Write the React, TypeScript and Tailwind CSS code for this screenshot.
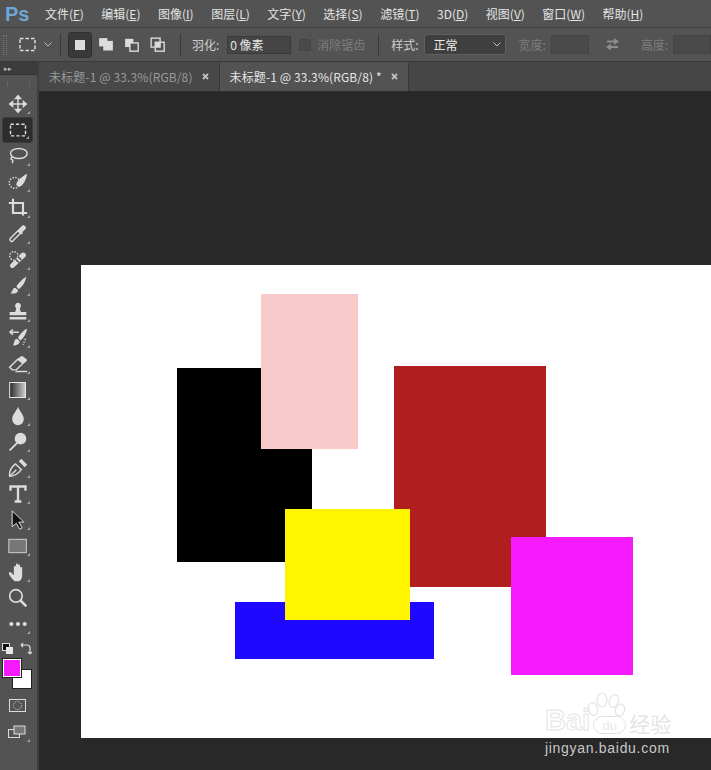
import type { ReactNode } from 'react'

const cn = 'font-["Noto_Sans_CJK_SC","Liberation_Sans",sans-serif]'

const menus: [string, string][] = [
  ['文件', 'F'],
  ['编辑', 'E'],
  ['图像', 'I'],
  ['图层', 'L'],
  ['文字', 'Y'],
  ['选择', 'S'],
  ['滤镜', 'T'],
  ['3D', 'D'],
  ['视图', 'V'],
  ['窗口', 'W'],
  ['帮助', 'H'],
]

function Icon({ children }: { children: ReactNode }) {
  return (
    <svg width="20" height="20" viewBox="0 0 24 24" fill="none" stroke="#dcdcdc" strokeWidth="1.7">
      {children}
    </svg>
  )
}

// one row in the left tool strip, corner=true gives the small flyout triangle
function Tool({ children, active, corner = true }: { children: ReactNode; active?: boolean; corner?: boolean }) {
  return (
    <div className={`relative flex items-center justify-center h-[26px] w-[31px] ml-[2px] rounded-[3px] ${active ? 'bg-[#2d2d2d] border border-[#3d3d3d]' : ''}`}>
      {children}
      {corner && (
        <div className="absolute right-[3px] bottom-[3px] w-0 h-0 border-l-[3px] border-l-transparent border-b-[3px] border-b-[#a8a8a8]" />
      )}
    </div>
  )
}

const tools: { key: string; active?: boolean; corner?: boolean; icon: ReactNode }[] = [
  { key: 'move', icon: <path d="M12 4v16M4 12h16M12 2l-3 3.500h6zM12 22l-3-3.500h6zM2 12l3.500-3v6zM22 12l-3.500-3v6z" fill="#dcdcdc" /> },
  { key: 'marquee', active: true, icon: <rect x="3" y="5" width="18" height="14" strokeDasharray="4 2.500" /> },
  { key: 'lasso', icon: <><ellipse cx="13" cy="9" rx="10" ry="6" /><path d="M5 13c-2 1-2 3 0 3.500 1 .5 1 2 0 4" /></> },
  { key: 'quick', icon: <><circle cx="8" cy="13" r="6.500" strokeDasharray="1.700 1.700" /><path d="M10 15c0-4 7-10 13-13-1 6-4 13-8 15-3 1-5-.5-5-2z" fill="#dcdcdc" stroke="none" /></> },
  { key: 'crop', icon: <path d="M1 6h17v15M6 1v17h17" strokeWidth="2.600" /> },
  { key: 'dropper', icon: <><path d="M4 21c-2-1-2-3-1-4l9-9 3 3-9 9c-1 1-1 1.500-2 1z" /><path d="M13 6l4-4c2-2 6 2 4 4l-4 4 1 1-1.500 1.500-5-5z" fill="#dcdcdc" stroke="none" /></> },
  { key: 'heal', icon: <><circle cx="7" cy="7" r="5" strokeDasharray="1.700 1.700" /><path d="M3 17L16 4c1.500-1.500 3-1.500 4.500 0s1.500 3 0 4.500L7 21c-1 1-2.500 1-3.500 0s-1.500-3-.5-4z" fill="#dcdcdc" stroke="none" /><path d="M9 11l4 4M12 8l4 4" stroke="#555" strokeWidth="2" /></> },
  { key: 'brush', icon: <path d="M22 1c-4 2-10 8-12 12l3 3C18 12 21 7 22 1zM9 14c-4 0-3 4-6 7 4 0 9 0 9-4z" fill="#dcdcdc" stroke="none" /> },
  { key: 'stamp', icon: <path d="M12 1a3.500 3.500 0 0 1 2.500 6c-.5 1 0 3 1 5H22v4H2v-4h6.500c1-2 1.500-4 1-5A3.500 3.500 0 0 1 12 1zM2 18h20v3H2z" fill="#dcdcdc" stroke="none" /> },
  { key: 'history', icon: <><path d="M23 1c-4 1-9 7-11 11l3 3c4-3 7-8 8-14zM11 13c-4 0-3 5-5 8 4 0 8-1 8-5z" fill="#dcdcdc" stroke="none" /><path d="M13 5H2M2 5l4-3M2 5l4 3" /><path d="M21 13l-3 7" strokeDasharray="1.700 1.700" /></> },
  { key: 'eraser', icon: <><path d="M2 16l10-10 6 5-8 8H5z" /><path d="M11 7l4-4c1-1 2-1 3 0l4 3c1 1 1 2 0 3l-4 3z" fill="#dcdcdc" stroke="none" /><path d="M9 21h14" /></> },
  { key: 'gradient', icon: <><defs><linearGradient id="grad"><stop offset="0" stopColor="#2a2a2a" /><stop offset="1" stopColor="#cfcfcf" /></linearGradient></defs><rect x="2" y="3" width="19" height="18" fill="url(#grad)" stroke="#e6e6e6" strokeWidth="1.200" /></> },
  { key: 'blur', icon: <path d="M12 1c2 6 7 9 7 15a7 7 0 0 1-14 0c0-6 5-9 7-15z" fill="#dcdcdc" stroke="none" /> },
  { key: 'dodge', icon: <><circle cx="15" cy="8" r="7" fill="#dcdcdc" stroke="none" /><path d="M11 13l-9 9" strokeWidth="2.200" /></> },
  { key: 'pen', icon: <><path d="M2 22c-1-6 2-11 7-15l7 7c-4 5-8 8-14 8z" /><path d="M13 4l3-3 7 7-3 3z" fill="#dcdcdc" stroke="none" /><path d="M2 22l8-8" /></> },
  { key: 'type', icon: <path d="M3 8V3h18v5M12 3v18M8 21h8" strokeWidth="2.800" /> },
  { key: 'select', icon: <path d="M5 1v19l5-4 4 7 3-1.500-4-7h6z" fill="#111" stroke="#dcdcdc" strokeWidth="1.200" /> },
  { key: 'shape', icon: <rect x="1" y="4" width="21" height="16" fill="#777" stroke="#cfcfcf" strokeWidth="1.200" /> },
  { key: 'hand', icon: <path d="M8 23c-3-2-6-7-7-9 0-2 1.500-2.500 3-1l3 3V6c0-1.500 2.500-1.500 2.500 0v5V3c0-1.500 2.500-1.500 2.500 0v8V4c0-1.500 2.500-1.500 2.500 0v8V7c0-1.500 2.500-1.500 2.500 0v9c0 4-2 7-4 7z" fill="#dcdcdc" stroke="none" /> },
  { key: 'zoom', corner: false, icon: <><circle cx="9.500" cy="9.500" r="7.500" strokeWidth="2" /><path d="M15 15l7 7" strokeWidth="3" /></> },
  { key: 'more', icon: <><circle cx="4" cy="12" r="2.500" fill="#dcdcdc" stroke="none" /><circle cx="12" cy="12" r="2.500" fill="#dcdcdc" stroke="none" /><circle cx="20" cy="12" r="2.500" fill="#dcdcdc" stroke="none" /></> },
]

function Tab({ active, title }: { active?: boolean; title: string }) {
  return (
    <div className={`flex items-center h-full pl-[10px] pr-[10px] border-r border-[#3a3a3a] ${active ? 'bg-[#535353] text-[#e6e6e6]' : 'bg-[#484848] text-[#9a9a9a]'}`}>
      <span className="text-[12px] tracking-[.12px] whitespace-nowrap">{title}</span>
      <svg className="ml-[9px]" width="7" height="7" viewBox="0 0 7 7" stroke="#c0c0c0" strokeWidth="1.800">
        <path d="M1 1l5 5M6 1L1 6" />
      </svg>
    </div>
  )
}

function ModeBtn({ children }: { children: ReactNode }) {
  return (
    <svg width="22" height="22" viewBox="0 0 16 16" fill="none" stroke="#dcdcdc" strokeWidth="1">
      {children}
    </svg>
  )
}

export default function App() {
  return (
    <div className={`w-[711px] h-[770px] overflow-hidden flex flex-col bg-[#282828] ${cn}`}>
      {/* Menu bar */}
      <div className="h-[28px] shrink-0 flex items-center bg-[#535353] border-b border-[#3e3e3e]">
        <span className="w-[45px] pl-[5px] text-[20px] font-bold text-[#6ea6d8] font-['Liberation_Sans',sans-serif] leading-none">Ps</span>
        <div className="flex gap-[17.5px] text-[12px] text-[#e4e4e4]">
          {menus.map(([name, key]) => (
            <span key={key} className="whitespace-nowrap">
              {name}(<span className="underline">{key}</span>)
            </span>
          ))}
        </div>
      </div>

      {/* Options bar */}
      <div className="h-[34px] shrink-0 flex items-center bg-[#535353] border-b border-[#3a3a3a] text-[12px] text-[#cfcfcf]">
        <div className="w-[4px] h-[20px] ml-[3px] border-x border-dotted border-[#777]" />
        <svg className="ml-[12px]" width="18" height="15" viewBox="0 0 18 15" fill="none" stroke="#dcdcdc" strokeWidth="1.500">
          <rect x="1" y="1.500" width="15" height="12" strokeDasharray="3.500 2" />
        </svg>
        <svg className="ml-[7px]" width="8" height="5" viewBox="0 0 8 5" fill="none" stroke="#bdbdbd" strokeWidth="1">
          <path d="M.5.5l3.500 3.500L7.500.5" />
        </svg>
        <div className="w-px h-[22px] bg-[#3a3a3a] ml-[8px]" />
        <div className="ml-[7px] w-[24px] h-[26px] flex items-center justify-center rounded-[3px] bg-[#3a3a3a] border border-[#2f2f2f]">
          <div className="w-[10px] h-[10px] bg-[#dcdcdc]" />
        </div>
        <div className="ml-[3px] flex gap-[4px]">
          <ModeBtn>
            <rect x="3" y="3" width="6" height="6" fill="#dcdcdc" stroke="none" />
            <rect x="6" y="5" width="7" height="7" fill="#dcdcdc" stroke="none" />
          </ModeBtn>
          <ModeBtn>
            <rect x="3" y="3.500" width="6" height="6" fill="#dcdcdc" stroke="none" />
            <rect x="6.500" y="6.500" width="6" height="6" fill="#535353" />
          </ModeBtn>
          <ModeBtn>
            <rect x="3" y="3" width="6.500" height="6.500" />
            <rect x="6" y="6" width="6.500" height="6.500" />
            <rect x="6" y="6" width="3.500" height="3.500" fill="#dcdcdc" stroke="none" />
          </ModeBtn>
        </div>
        <div className="w-px h-[22px] bg-[#3a3a3a] ml-[11px]" />
        <span className="ml-[11px] whitespace-nowrap">羽化:</span>
        <div className="ml-[8px] w-[64px] h-[18px] flex items-center pl-[2px] bg-[#454545] border border-[#3a3a3a] text-[#e6e6e6] whitespace-nowrap">0 像素</div>
        <div className="ml-[8px] w-[12px] h-[12px] rounded-[2px] bg-[#4a4a4a] border border-[#444]" />
        <span className="ml-[6px] text-[#7d7d7d] whitespace-nowrap">消除锯齿</span>
        <div className="w-px h-[22px] bg-[#3a3a3a] ml-[13px]" />
        <span className="ml-[12px] whitespace-nowrap">样式:</span>
        <div className="ml-[5px] w-[83px] h-[21px] flex items-center justify-between pl-[9px] pr-[4px] rounded-[3px] bg-[#3f3f3f] border border-[#5f5f5f] text-[#f0f0f0]">
          正常
          <svg width="8" height="5" viewBox="0 0 8 5" fill="none" stroke="#bdbdbd" strokeWidth="1">
            <path d="M.5.5l3.500 3.500L7.500.5" />
          </svg>
        </div>
        <span className="ml-[12px] text-[#7d7d7d] whitespace-nowrap">宽度:</span>
        <div className="ml-[5px] w-[38px] h-[19px] bg-[#4a4a4a] border border-[#444]" />
        <svg className="ml-[16px]" width="15" height="13" viewBox="0 0 15 13" fill="#8c8c8c">
          <path d="M14 3.500L9 0v2.500H2v2h7V7zM1 9l5-3.500V8h7v2H6v2.500z" />
        </svg>
        <span className="ml-[21px] text-[#7d7d7d] whitespace-nowrap">高度:</span>
        <div className="ml-[5px] w-[38px] h-[19px] shrink-0 bg-[#4a4a4a] border border-[#444]" />
      </div>

      <div className="flex-1 flex min-h-0">
        {/* Tool strip */}
        <div className="w-[39px] shrink-0 flex flex-col bg-[#535353] border-r-2 border-[#3f3f3f]">
          <div className="h-[13px] flex items-center pl-[4px] bg-[#3c3c3c] border-b border-[#333] text-[7px] leading-none text-[#bbb]">▸▸</div>
          <div className="h-[16px] mx-[7px] flex items-center">
            <div className="w-full h-[5px] border-x border-dotted border-[#777]" />
          </div>
          <div className="flex flex-col">
            {tools.map(t => (
              <Tool key={t.key} active={t.active} corner={t.corner}>
                <Icon>{t.icon}</Icon>
              </Tool>
            ))}
          </div>

          {/* Swatches */}
          <div className="relative mt-[6px] h-[60px]">
            <div className="absolute left-[2px] top-0 w-[8px] h-[8px] bg-[#111] border border-[#ddd]" />
            <div className="absolute left-[6px] top-[4px] w-[7px] h-[7px] bg-[#e6e6e6] -z-0" />
            <svg className="absolute left-[20px] top-0" width="12" height="12" viewBox="0 0 12 12" fill="none" stroke="#dcdcdc" strokeWidth="1.200">
              <path d="M1 2h6c2 0 3 1 3 3v6M1 2l2-2M1 2l2 2M10 11l-2-2M10 11l2-2" />
            </svg>
            <div className="absolute left-[12px] top-[26px] w-[20px] h-[20px] bg-white border border-[#222]" />
            <div className="absolute left-[3px] top-[16px] w-[18px] h-[18px] bg-[#f61bff] border border-white outline outline-1 outline-[#222]" />
          </div>

          <div className="flex justify-center pr-[1px] mt-[-4px] mb-[6px]">
            <svg width="18" height="14" viewBox="0 0 18 14" fill="none" stroke="#dcdcdc" strokeWidth="1">
              <rect x=".5" y=".5" width="16" height="12" />
              <circle cx="8.500" cy="6.500" r="4" strokeDasharray="1 1" />
            </svg>
          </div>
          <Tool>
            <svg width="20" height="14" viewBox="0 0 20 14" fill="none" stroke="#dcdcdc" strokeWidth="1">
              <rect x=".5" y="4.500" width="11" height="8" />
              <rect x="6" y="1" width="11" height="8" fill="#777" stroke="#dcdcdc" />
            </svg>
          </Tool>
        </div>

        <div className="flex-1 min-w-0 flex flex-col">
          {/* Tabs */}
          <div className="h-[30px] shrink-0 flex items-center bg-[#464646] border-b border-[#2c2c2c]">
            <Tab title="未标题-1 @ 33.3%(RGB/8)" />
            <Tab active title="未标题-1 @ 33.3%(RGB/8) *" />
          </div>

          {/* Document area, shapes sit at their spot on the canvas */}
          <div className="flex-1 min-h-0 pt-[173px] pl-[42px] bg-[#282828] overflow-hidden">
            <div className="relative h-[473px] w-[640px] bg-white">
              <div className="absolute left-[96px] top-[103px] w-[135px] h-[194px] bg-black" />
              <div className="absolute left-[180px] top-[29px] w-[97px] h-[155px] bg-[#f9caca]" />
              <div className="absolute left-[313px] top-[101px] w-[152px] h-[221px] bg-[#b01e1e]" />
              <div className="absolute left-[154px] top-[337px] w-[199px] h-[57px] bg-[#1e08ff]" />
              <div className="absolute left-[204px] top-[244px] w-[125px] h-[111px] bg-[#fff500]" />
              <div className="absolute left-[430px] top-[272px] w-[122px] h-[138px] bg-[#f61bff]" />
              {/* watermark */}
              <svg className="absolute left-[505px] top-[427px]" width="40" height="26" viewBox="0 0 40 26" fill="none" stroke="#e4e4e4" strokeWidth="1.200">
                <ellipse cx="7" cy="17" rx="4.500" ry="6.500" transform="rotate(-15 7 17)" />
                <ellipse cx="16" cy="8" rx="5" ry="7" />
                <ellipse cx="28" cy="9" rx="4.500" ry="6.500" transform="rotate(15 28 9)" />
                <ellipse cx="34" cy="18" rx="4.500" ry="6" transform="rotate(15 34 18)" />
              </svg>
              <div className="absolute left-[464px] top-[442px] h-[28px] flex items-end font-['Liberation_Sans',sans-serif] text-[29px] font-bold leading-none text-white [-webkit-text-stroke:1px_#e4e4e4]">
                Bai
                <span className="w-[33px] h-[18px] ml-[3px] mb-[1px] flex items-center justify-center text-[13px] font-normal rounded-full border border-[#e4e4e4] text-[#e8e8e8] [-webkit-text-stroke:0]">du</span>
                <span className={`ml-[3px] text-[21px] leading-[24px] font-normal text-[#e4e4e4] [-webkit-text-stroke:0] ${cn}`}>经验</span>
              </div>
            </div>
            <div className="mt-[2px] ml-[464px] w-[180px] text-[14px] leading-[16px] tracking-[.7px] text-[#c8c8c8] font-['Liberation_Sans',sans-serif]">jingyan.baidu.com</div>
          </div>
        </div>
      </div>
    </div>
  )
}
